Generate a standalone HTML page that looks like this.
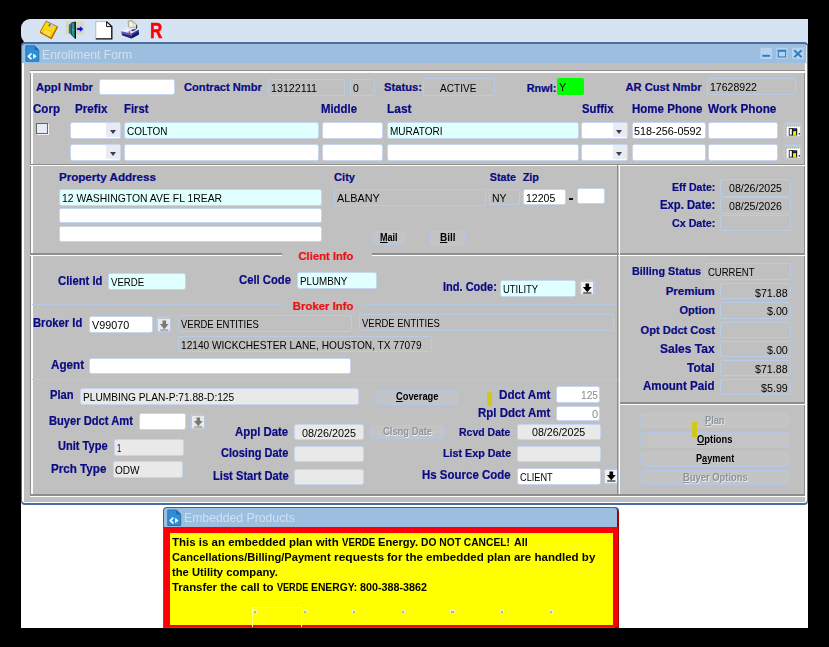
<!DOCTYPE html>
<html><head><meta charset="utf-8"><title>Enrollment Form</title>
<style>
html,body{margin:0;padding:0;background:#000;}
body{width:829px;height:647px;position:relative;overflow:hidden;font-family:"Liberation Sans",sans-serif;}
div,span,i{position:absolute;box-sizing:border-box;display:block;}
#tb{left:21px;top:19px;width:787px;height:25px;background:#d5e3f2;border-radius:9px 0 0 9px;}
#win{left:20.9px;top:42.4px;width:787.2px;height:462.4px;background:#4b6c9e;border-radius:4px 4px 4px 4px;}
#wi{left:22.2px;top:63.3px;width:784.7px;height:440.2px;background:#fff;border-radius:0 0 3px 3px;}
#ttl{left:22.2px;top:43.7px;width:784.7px;height:19.7px;background:#9dbfdf;border-radius:3px 3px 0 0;}
#body{left:24.1px;top:63.3px;width:781px;height:438.3px;background:#c0c0c0;}
#white{left:20.9px;top:500px;width:787.2px;height:127.7px;background:#fff;}
.lg{background:#8e8e8e;}
.lw{background:#fbfbfb;}
.bf{border:1px solid #b4c8e2;border-left:0;border-radius:0 4px 0 0;border-right-color:transparent}
.lb{font-weight:bold;white-space:nowrap;height:16px;line-height:16px;transform-origin:0 50%;}
.fd{white-space:nowrap;overflow:hidden;border:1px solid #b9cce6;border-radius:2.5px;}
.fd span{transform-origin:0 50%;height:100%;}
.fd.nb{border:0;border-radius:2px;}
.bt{font-size:10px;font-weight:bold;color:#000;background:#c4c4c4;border:1.3px solid #b4c8e6;border-radius:3.5px;white-space:nowrap;overflow:hidden;}
.bt span{transform-origin:0 50%;height:100%;}
.bt.dis{color:#8d939c;text-shadow:0.7px 0.7px 0 #f0f0f0;}
.cb{width:11.6px;height:11.6px;background:#e8ecf5;border:1.1px solid #666;box-shadow:1px 1px 0 #f4f4f4;}
.cbx{width:14px;height:13.6px;background:#e8ebf2;border-radius:1px;}
.cbx i{left:3.7px;top:6.2px;width:0;height:0;border-left:3.8px solid transparent;border-right:3.8px solid transparent;border-top:4.4px solid #3c3c58;}
.ib{width:18.8px;height:15.7px;border:1.3px solid #b4c8e6;border-radius:3.5px;background:#c8c8c8;}
.ib svg{position:absolute;left:-1.3px;top:-0.3px}
.lov{width:12px;height:12.4px;}
.lov svg{position:absolute;left:0;top:0}
.lovb{border:1.3px solid #b4c8e6;border-radius:3px;background:#c6c6c6;}
.ym{background:#cdc81a;}
#ep{left:162.6px;top:506.8px;width:456.8px;height:120.9px;background:#45608f;border-radius:4px 4px 0 0;}
#epm{left:615px;top:508.5px;width:4.4px;height:119.2px;background:#a0000c;border-radius:0 4px 0 0;}
#epr{left:163.8px;top:527.1px;width:454.6px;height:99.8px;background:#fb0006;}
#eptl{left:163.8px;top:508px;width:453.4px;height:19.2px;background:#9dbfdf;border-radius:3px 3px 0 0;}
#epy{left:169.8px;top:533.2px;width:443.1px;height:91.5px;background:#ffff00;}
#ov{position:absolute;left:0;top:0;}
.bi{width:4.4px;height:4.4px;background:#eef2c4;}
.bi i{left:1px;top:2px;width:2.4px;height:2px;background:#9ccf50;}
</style></head>
<body>
<div id="white"></div>
<div id="tb"></div>
<div id="win"></div>
<div id="ttl"></div>
<div id="wi"></div>
<div style="left:805.7px;top:45px;width:1.3px;height:19px;background:#dbe8f6"></div>
<div class="lb" style="left:42.2px;top:46.5px;font-size:13px;color:#cfe0f2;font-weight:normal;transform:scaleX(0.9397);">Enrollment Form</div>
<div id="body"></div>
<div class="lg" style="left:29.8px;top:70px;width:1.4px;height:426.8px"></div>
<div class="lw" style="left:31.2px;top:70px;width:1.4px;height:426.8px"></div>
<div class="lg" style="left:803.8px;top:70px;width:1.3px;height:426.8px"></div>
<div class="lw" style="left:805.1px;top:70px;width:0px;height:426.8px"></div>
<div class="lg" style="left:29.8px;top:69.9px;width:775.2px;height:1.4px"></div>
<div class="lw" style="left:29.8px;top:71.3px;width:775.2px;height:1.4px"></div>
<div class="lg" style="left:29.8px;top:163.7px;width:775.2px;height:1.4px"></div>
<div class="lw" style="left:29.8px;top:165.1px;width:775.2px;height:1.4px"></div>
<div class="lg" style="left:29.8px;top:253.2px;width:775.2px;height:1.4px"></div>
<div class="lw" style="left:29.8px;top:254.6px;width:775.2px;height:1.4px"></div>
<div class="lg" style="left:619px;top:402.4px;width:186px;height:1.4px"></div>
<div class="lw" style="left:619px;top:403.8px;width:186px;height:1.4px"></div>
<div class="lg" style="left:29.8px;top:494.3px;width:775.2px;height:1.3px"></div>
<div class="lw" style="left:29.8px;top:495.6px;width:775.2px;height:1.2px"></div>
<div class="lg" style="left:617.1px;top:165px;width:1.4px;height:329px"></div>
<div class="lw" style="left:618.5px;top:165px;width:1.4px;height:329px"></div>
<div class="lb" style="left:36px;top:79px;font-size:11.15px;color:#0a0a82;-webkit-text-stroke:0.2px #0a0a82;">Appl Nmbr</div>
<div class="fd" style="left:99px;top:78.5px;width:76px;height:16.0px;line-height:16.0px;background:#fff;border-color:#c6d6ee;"></div>
<div class="lb" style="left:184px;top:79px;font-size:11.14px;color:#0a0a82;-webkit-text-stroke:0.2px #0a0a82;">Contract Nmbr</div>
<div class="fd" style="left:268px;top:79px;width:77px;height:17px;line-height:17px;background:#c0c0c0;"><span style="left:2px;top:0px;font-size:11.5px;color:#000;transform:scaleX(0.9311)">13122111</span></div>
<div class="fd" style="left:350px;top:79px;width:24.9px;height:17px;line-height:17px;background:#c0c0c0;"><span style="left:2px;top:0px;font-size:11.5px;color:#000;transform:scaleX(0.9076)">0</span></div>
<div class="lb" style="left:384px;top:79px;font-size:11.21px;color:#0a0a82;-webkit-text-stroke:0.2px #0a0a82;">Status:</div>
<div class="fd" style="left:423.3px;top:78.3px;width:71.3px;height:17.3px;line-height:17.3px;background:#c0c0c0;"><span style="left:15.8px;top:1px;font-size:11.5px;color:#000;transform:scaleX(0.8761)">ACTIVE</span></div>
<div class="lb" style="left:526.7px;top:80px;font-size:10.88px;color:#0a0a82;-webkit-text-stroke:0.2px #0a0a82;">Rnwl:</div>
<div class="fd nb" style="left:557px;top:77.8px;width:27.4px;height:17.3px;line-height:17.3px;background:#00ff00;border-color:#c6d6ee;"><span style="left:1.6px;top:1.5px;font-size:11.5px;color:#000;transform:scaleX(0.9385)">Y</span></div>
<div class="lb" style="left:625.6px;top:78.5px;font-size:11.12px;color:#0a0a82;-webkit-text-stroke:0.2px #0a0a82;">AR Cust Nmbr</div>
<div class="fd" style="left:707.1px;top:77.6px;width:88.6px;height:17.0px;line-height:17.0px;background:#c0c0c0;"><span style="left:2.3px;top:0px;font-size:11.5px;color:#000;transform:scaleX(0.9174)">17628922</span></div>
<div class="lb" style="left:33px;top:101.4px;font-size:12.73px;color:#0a0a82;-webkit-text-stroke:0.2px #0a0a82;transform:scaleX(0.9091);">Corp</div>
<div class="lb" style="left:75px;top:101.4px;font-size:12.85px;color:#0a0a82;-webkit-text-stroke:0.2px #0a0a82;transform:scaleX(0.9091);">Prefix</div>
<div class="lb" style="left:124px;top:101.4px;font-size:12.43px;color:#0a0a82;-webkit-text-stroke:0.2px #0a0a82;transform:scaleX(0.9091);">First</div>
<div class="lb" style="left:321px;top:101.4px;font-size:12.50px;color:#0a0a82;-webkit-text-stroke:0.2px #0a0a82;transform:scaleX(0.9091);">Middle</div>
<div class="lb" style="left:386.5px;top:101.4px;font-size:13.10px;color:#0a0a82;-webkit-text-stroke:0.2px #0a0a82;transform:scaleX(0.9091);">Last</div>
<div class="lb" style="left:581.5px;top:101.4px;font-size:12.47px;color:#0a0a82;-webkit-text-stroke:0.2px #0a0a82;transform:scaleX(0.9091);">Suffix</div>
<div class="lb" style="left:631.9px;top:101.4px;font-size:12.68px;color:#0a0a82;-webkit-text-stroke:0.2px #0a0a82;transform:scaleX(0.9091);">Home Phone</div>
<div class="lb" style="left:708.4px;top:101.4px;font-size:12.95px;color:#0a0a82;-webkit-text-stroke:0.2px #0a0a82;transform:scaleX(0.9091);">Work Phone</div>
<div class="cb" style="left:36.4px;top:122.5px"></div>
<div class="fd" style="left:70px;top:122px;width:51px;height:16.5px;line-height:16.5px;background:#fff;border-color:#c6d6ee;"></div>
<div class="cbx" style="left:106.2px;top:123.4px"><i></i></div>
<div class="fd" style="left:124px;top:122px;width:195px;height:16.5px;line-height:16.5px;background:#e0ffff;border-color:#c6d6ee;"><span style="left:2px;top:0px;font-size:11.5px;color:#000;transform:scaleX(0.8643)">COLTON</span></div>
<div class="fd" style="left:322px;top:122px;width:61px;height:16.5px;line-height:16.5px;background:#fff;border-color:#c6d6ee;"></div>
<div class="fd" style="left:387px;top:122px;width:191.6px;height:16.5px;line-height:16.5px;background:#e0ffff;border-color:#c6d6ee;"><span style="left:2px;top:0px;font-size:11.5px;color:#000;transform:scaleX(0.8709)">MURATORI</span></div>
<div class="fd" style="left:581px;top:122px;width:46.6px;height:16.5px;line-height:16.5px;background:#fff;border-color:#c6d6ee;"></div>
<div class="cbx" style="left:612.6px;top:123.4px"><i></i></div>
<div class="fd" style="left:631.9px;top:122px;width:74.0px;height:16.5px;line-height:16.5px;background:#fff;border-color:#c6d6ee;"><span style="left:1.5px;top:0px;font-size:11.5px;color:#000;transform:scaleX(0.9432)">518-256-0592</span></div>
<div class="fd" style="left:707.9px;top:122px;width:69.7px;height:16.5px;line-height:16.5px;background:#fff;border-color:#c6d6ee;"></div>
<div class="ib" style="left:783.1px;top:122.3px"><svg width="19" height="15" viewBox="0 0 19 15"><rect x="3.7" y="3.4" width="13.2" height="9.3" fill="#fdfdfd"/><path d="M3,2.9 H16.6 M2.7,3.2 V12.4" stroke="#9a9a9a" stroke-width="0.8" stroke-dasharray="1 1" fill="none"/><rect x="6.2" y="5.6" width="3.2" height="6.5" fill="#fff" stroke="#111" stroke-width="0.8"/><rect x="8.8" y="5.3" width="5.4" height="7.1" fill="#111"/><rect x="10.1" y="8.1" width="3" height="4.3" fill="#f4ea00"/><rect x="10" y="5.8" width="3" height="1.5" fill="#1428c8"/><rect x="15.7" y="10" width="1.3" height="1.6" fill="#2436e0"/></svg></div>
<div class="fd" style="left:70px;top:144px;width:51px;height:16.5px;line-height:16.5px;background:#fff;border-color:#c6d6ee;"></div>
<div class="cbx" style="left:106.2px;top:145.4px"><i></i></div>
<div class="fd" style="left:124px;top:144px;width:195px;height:16.5px;line-height:16.5px;background:#fff;border-color:#c6d6ee;"></div>
<div class="fd" style="left:322px;top:144px;width:61px;height:16.5px;line-height:16.5px;background:#fff;border-color:#c6d6ee;"></div>
<div class="fd" style="left:387px;top:144px;width:191.6px;height:16.5px;line-height:16.5px;background:#fff;border-color:#c6d6ee;"></div>
<div class="fd" style="left:581px;top:144px;width:46.6px;height:16.5px;line-height:16.5px;background:#fff;border-color:#c6d6ee;"></div>
<div class="cbx" style="left:612.6px;top:145.4px"><i></i></div>
<div class="fd" style="left:631.9px;top:144px;width:74.0px;height:16.5px;line-height:16.5px;background:#fff;border-color:#c6d6ee;"></div>
<div class="fd" style="left:707.9px;top:144px;width:69.7px;height:16.5px;line-height:16.5px;background:#fff;border-color:#c6d6ee;"></div>
<div class="ib" style="left:783.1px;top:144.3px"><svg width="19" height="15" viewBox="0 0 19 15"><rect x="3.7" y="3.4" width="13.2" height="9.3" fill="#fdfdfd"/><path d="M3,2.9 H16.6 M2.7,3.2 V12.4" stroke="#9a9a9a" stroke-width="0.8" stroke-dasharray="1 1" fill="none"/><rect x="6.2" y="5.6" width="3.2" height="6.5" fill="#fff" stroke="#111" stroke-width="0.8"/><rect x="8.8" y="5.3" width="5.4" height="7.1" fill="#111"/><rect x="10.1" y="8.1" width="3" height="4.3" fill="#f4ea00"/><rect x="10" y="5.8" width="3" height="1.5" fill="#1428c8"/><rect x="15.7" y="10" width="1.3" height="1.6" fill="#2436e0"/></svg></div>
<div class="lb" style="left:58.9px;top:169px;font-size:11.64px;color:#0a0a82;-webkit-text-stroke:0.2px #0a0a82;">Property Address</div>
<div class="fd" style="left:59px;top:189.2px;width:262.6px;height:16.5px;line-height:16.5px;background:#e0ffff;border-color:#c6d6ee;"><span style="left:2.1px;top:-0.5px;font-size:11.5px;color:#000;transform:scaleX(0.9044)">12 WASHINGTON AVE FL 1REAR</span></div>
<div class="fd" style="left:59px;top:207.7px;width:262.6px;height:15.5px;line-height:15.5px;background:#fff;border-color:#c6d6ee;"></div>
<div class="fd" style="left:59px;top:225.7px;width:262.6px;height:16.6px;line-height:16.6px;background:#fff;border-color:#c6d6ee;"></div>
<div class="lb" style="left:334.1px;top:169px;font-size:11.06px;color:#0a0a82;-webkit-text-stroke:0.2px #0a0a82;">City</div>
<div class="fd" style="left:334px;top:188.9px;width:152px;height:16.8px;line-height:16.8px;background:#c0c0c0;"><span style="left:2.2px;top:0px;font-size:11.5px;color:#000;transform:scaleX(0.9429)">ALBANY</span></div>
<div class="lb" style="left:489.8px;top:169px;font-size:10.67px;color:#0a0a82;-webkit-text-stroke:0.2px #0a0a82;">State</div>
<div class="fd" style="left:489px;top:188.7px;width:31px;height:16.8px;line-height:16.8px;background:#c0c0c0;"><span style="left:1.8px;top:0px;font-size:11.5px;color:#000;transform:scaleX(0.9134)">NY</span></div>
<div class="lb" style="left:522.7px;top:169px;font-size:10.87px;color:#0a0a82;-webkit-text-stroke:0.2px #0a0a82;">Zip</div>
<div class="fd" style="left:523px;top:188.7px;width:43.3px;height:16.8px;line-height:16.8px;background:#fff;border-color:#c6d6ee;"><span style="left:2.2px;top:0px;font-size:11.5px;color:#000;transform:scaleX(0.9170)">12205</span></div>
<div style="left:568.8px;top:198px;width:4.2px;height:2px;background:#111"></div>
<div class="fd" style="left:576.9px;top:187.7px;width:28.3px;height:16.8px;line-height:16.8px;background:#fff;border-color:#c6d6ee;"></div>
<div class="bt" style="left:371.8px;top:231.3px;width:34.4px;height:14.1px;line-height:12.1px"><span style="left:7.2px;top:0;transform:scaleX(0.9047)"><u>M</u>ail</span></div>
<div class="bt" style="left:430px;top:231.3px;width:34.7px;height:14.3px;line-height:12.3px"><span style="left:8.6px;top:0;transform:scaleX(0.9960)"><u>B</u>ill</span></div>
<div class="lb" style="left:671.5px;top:178.7px;font-size:11.40px;color:#0a0a82;-webkit-text-stroke:0.2px #0a0a82;transform:scaleX(0.9259);">Eff Date:</div>
<div class="fd" style="left:720.4px;top:179.2px;width:70.3px;height:17.5px;line-height:17.5px;background:#c0c0c0;"><span style="left:7.3px;top:0px;font-size:11.5px;color:#000;transform:scaleX(0.9200)">08/26/2025</span></div>
<div class="lb" style="left:659.7px;top:197px;font-size:12.19px;color:#0a0a82;-webkit-text-stroke:0.2px #0a0a82;transform:scaleX(0.9259);">Exp. Date:</div>
<div class="fd" style="left:720.4px;top:197.2px;width:70.3px;height:16.8px;line-height:16.8px;background:#c0c0c0;"><span style="left:7.3px;top:0px;font-size:11.5px;color:#000;transform:scaleX(0.9200)">08/25/2026</span></div>
<div class="lb" style="left:671.5px;top:214.5px;font-size:11.55px;color:#0a0a82;-webkit-text-stroke:0.2px #0a0a82;transform:scaleX(0.9259);">Cx Date:</div>
<div class="fd" style="left:720.4px;top:215px;width:70.3px;height:16.3px;line-height:16.3px;background:#c0c0c0;"></div>
<div style="left:281.5px;top:250px;width:90.3px;height:10px;background:#c0c0c0"></div>
<div class="lb" style="left:298.5px;top:248px;font-size:11.25px;color:#e81010;-webkit-text-stroke:0.2px #e81010;">Client Info</div>
<div class="lb" style="left:57.6px;top:273.2px;font-size:12.83px;color:#0a0a82;-webkit-text-stroke:0.2px #0a0a82;transform:scaleX(0.8772);">Client Id</div>
<div class="fd" style="left:107.6px;top:273.4px;width:78.2px;height:16.6px;line-height:16.6px;background:#e0ffff;border-color:#c6d6ee;"><span style="left:2.0px;top:0px;font-size:11.5px;color:#000;transform:scaleX(0.8350)">VERDE</span></div>
<div class="lb" style="left:239.3px;top:272.4px;font-size:12.62px;color:#0a0a82;-webkit-text-stroke:0.2px #0a0a82;transform:scaleX(0.8929);">Cell Code</div>
<div class="fd" style="left:297px;top:272.4px;width:80.3px;height:16.8px;line-height:16.8px;background:#e0ffff;border-color:#c6d6ee;"><span style="left:1.8px;top:0px;font-size:11.5px;color:#000;transform:scaleX(0.8524)">PLUMBNY</span></div>
<div class="lb" style="left:442.6px;top:279px;font-size:11.91px;color:#0a0a82;-webkit-text-stroke:0.2px #0a0a82;transform:scaleX(0.9259);">Ind. Code:</div>
<div class="fd" style="left:500.3px;top:279.5px;width:76.0px;height:17.0px;line-height:17.0px;background:#e0ffff;border-color:#c6d6ee;"><span style="left:1.5px;top:0px;font-size:11.5px;color:#000;transform:scaleX(0.8199)">UTILITY</span></div>
<div class="lovb" style="left:579px;top:279.3px;width:15.7px;height:16.8px"></div>
<div class="lov" style="left:580.9px;top:281.7px;background:#f0f0f0"><svg width="12" height="12.4" viewBox="0 0 12 12.4"><path d="M4.5,1.5 H8.1 V4.9 H10.7 L6.3,10.2 L1.9,4.9 H4.5 Z" fill="#000"/><rect x="2.2" y="10.5" width="8.2" height="1" fill="#000"/></svg></div>
<div class="bf" style="left:31.5px;top:304.3px;width:586px;height:76px"></div>
<div style="left:283.2px;top:300px;width:79.8px;height:10px;background:#c0c0c0"></div>
<div class="lb" style="left:292.8px;top:297.5px;font-size:11.38px;color:#e81010;-webkit-text-stroke:0.2px #e81010;">Broker Info</div>
<div class="lb" style="left:33.3px;top:315.3px;font-size:12.60px;color:#0a0a82;-webkit-text-stroke:0.2px #0a0a82;transform:scaleX(0.8929);">Broker Id</div>
<div class="fd" style="left:89px;top:315.8px;width:64px;height:17.6px;line-height:17.6px;background:#fff;border-color:#c6d6ee;"><span style="left:1.5px;top:0px;font-size:11.5px;color:#000;transform:scaleX(0.9363)">V99070</span></div>
<div class="lovb" style="left:155.8px;top:316.1px;width:15.7px;height:16.8px"></div>
<div class="lov" style="left:157.7px;top:318.5px;background:#e9e9e9"><svg width="12" height="12.4" viewBox="0 0 12 12.4"><path d="M4.5,1.5 H8.1 V4.9 H10.7 L6.3,10.2 L1.9,4.9 H4.5 Z" fill="#7a7a7a"/><rect x="2.2" y="10.5" width="8.2" height="1" fill="#7a7a7a"/></svg></div>
<div class="fd" style="left:178px;top:314.5px;width:173.7px;height:17.0px;line-height:17.0px;background:#c0c0c0;"><span style="left:2px;top:0px;font-size:11.5px;color:#000;transform:scaleX(0.8235)">VERDE ENTITIES</span></div>
<div class="fd" style="left:359.2px;top:313.8px;width:254.5px;height:16.8px;line-height:16.8px;background:#c0c0c0;"><span style="left:2.0px;top:0px;font-size:11.5px;color:#000;transform:scaleX(0.8235)">VERDE ENTITIES</span></div>
<div class="fd" style="left:178px;top:335.6px;width:253.8px;height:16.8px;line-height:16.8px;background:#c0c0c0;"><span style="left:2px;top:0px;font-size:11.5px;color:#000;transform:scaleX(0.8806)">12140 WICKCHESTER LANE, HOUSTON, TX 77079</span></div>
<div class="lb" style="left:50.9px;top:357.2px;font-size:12.62px;color:#0a0a82;-webkit-text-stroke:0.2px #0a0a82;transform:scaleX(0.9259);">Agent</div>
<div class="fd" style="left:89px;top:357.7px;width:262.2px;height:16.3px;line-height:16.3px;background:#fff;border-color:#c6d6ee;"></div>
<div class="lb" style="left:49.6px;top:386.6px;font-size:12.51px;color:#0a0a82;-webkit-text-stroke:0.2px #0a0a82;transform:scaleX(0.8929);">Plan</div>
<div class="fd" style="left:80.2px;top:388.3px;width:279.0px;height:17.1px;line-height:17.1px;background:#e9e9e9;border-color:#c6d6ee;"><span style="left:1.5px;top:0px;font-size:11.5px;color:#000;transform:scaleX(0.8824)">PLUMBING PLAN-P:71.88-D:125</span></div>
<div class="bt" style="left:376px;top:390.2px;width:81.6px;height:14.6px;line-height:12.6px"><span style="left:18.6px;top:0;transform:scaleX(0.9303)"><u>C</u>overage</span></div>
<div class="ym" style="left:486.5px;top:392px;width:5px;height:14px"></div>
<div class="lb" style="left:499px;top:386.6px;font-size:13.32px;color:#0a0a82;-webkit-text-stroke:0.2px #0a0a82;transform:scaleX(0.8772);">Ddct Amt</div>
<div class="fd" style="left:555.5px;top:386.3px;width:44.5px;height:16.3px;line-height:16.3px;background:#fff;border-color:#c6d6ee;"><span style="left:24.1px;top:0px;font-size:11.5px;color:#8a8a8a;transform:scaleX(0.8867)">125</span></div>
<div class="lb" style="left:478.2px;top:405.2px;font-size:12.40px;color:#0a0a82;-webkit-text-stroke:0.2px #0a0a82;transform:scaleX(0.9259);">Rpl Ddct Amt</div>
<div class="fd" style="left:555.5px;top:405.6px;width:44.5px;height:15.8px;line-height:15.8px;background:#fff;border-color:#c6d6ee;"><span style="left:35.0px;top:0px;font-size:11.5px;color:#8a8a8a;transform:scaleX(0.9545)">0</span></div>
<div class="lb" style="left:49.4px;top:413px;font-size:11.95px;color:#0a0a82;-webkit-text-stroke:0.2px #0a0a82;transform:scaleX(0.9346);">Buyer Ddct Amt</div>
<div class="fd" style="left:138.7px;top:413.4px;width:47.6px;height:17.1px;line-height:17.1px;background:#fff;border-color:#c6d6ee;"></div>
<div class="lovb" style="left:189.6px;top:413.2px;width:15.7px;height:16.8px"></div>
<div class="lov" style="left:191.5px;top:415.6px;background:#e9e9e9"><svg width="12" height="12.4" viewBox="0 0 12 12.4"><path d="M4.5,1.5 H8.1 V4.9 H10.7 L6.3,10.2 L1.9,4.9 H4.5 Z" fill="#7a7a7a"/><rect x="2.2" y="10.5" width="8.2" height="1" fill="#7a7a7a"/></svg></div>
<div class="lb" style="left:235px;top:424.2px;font-size:12.77px;color:#0a0a82;-webkit-text-stroke:0.2px #0a0a82;transform:scaleX(0.8929);">Appl Date</div>
<div class="fd" style="left:294px;top:424.2px;width:70.3px;height:16.3px;line-height:16.3px;background:#e9e9e9;border-color:#c6d6ee;"><span style="left:7.3px;top:0px;font-size:11.5px;color:#000;transform:scaleX(0.9374)">08/26/2025</span></div>
<div class="bt dis" style="left:370px;top:424.6px;width:74.6px;height:14.0px;line-height:12.0px"><span style="left:12px;top:0;transform:scaleX(0.9381)">Clsng Date</span></div>
<div class="lb" style="left:459.4px;top:423.5px;font-size:11.45px;color:#0a0a82;-webkit-text-stroke:0.2px #0a0a82;transform:scaleX(0.9174);">Rcvd Date</div>
<div class="fd" style="left:517.3px;top:424.4px;width:83.3px;height:15.8px;line-height:15.8px;background:#e9e9e9;border-color:#c6d6ee;"><span style="left:14.1px;top:0px;font-size:11.5px;color:#000;transform:scaleX(0.9252)">08/26/2025</span></div>
<div class="lb" style="left:58.1px;top:438.3px;font-size:11.92px;color:#0a0a82;-webkit-text-stroke:0.2px #0a0a82;transform:scaleX(0.9302);">Unit Type</div>
<div class="fd" style="left:113.6px;top:438.7px;width:70.7px;height:17.3px;line-height:17.3px;background:#e9e9e9;border-color:#c6d6ee;"><span style="left:2.7px;top:0px;font-size:11.5px;color:#000;transform:scaleX(0.6572)">1</span></div>
<div class="lb" style="left:220.8px;top:445px;font-size:11.85px;color:#0a0a82;-webkit-text-stroke:0.2px #0a0a82;transform:scaleX(0.9302);">Closing Date</div>
<div class="fd" style="left:294px;top:446.3px;width:70.3px;height:16.2px;line-height:16.2px;background:#e9e9e9;border-color:#c6d6ee;"></div>
<div class="lb" style="left:442.6px;top:445.3px;font-size:11.19px;color:#0a0a82;-webkit-text-stroke:0.2px #0a0a82;transform:scaleX(0.9615);">List Exp Date</div>
<div class="fd" style="left:517.3px;top:446px;width:83.3px;height:16.3px;line-height:16.3px;background:#e9e9e9;border-color:#c6d6ee;"></div>
<div class="lb" style="left:51.4px;top:460.5px;font-size:13.49px;color:#0a0a82;-webkit-text-stroke:0.2px #0a0a82;transform:scaleX(0.8621);">Prch Type</div>
<div class="fd" style="left:112.8px;top:461.2px;width:70.3px;height:17.0px;line-height:17.0px;background:#e9e9e9;border-color:#c6d6ee;"><span style="left:1.5px;top:0px;font-size:11.5px;color:#000;transform:scaleX(0.8752)">ODW</span></div>
<div class="lb" style="left:212.5px;top:468px;font-size:11.94px;color:#0a0a82;-webkit-text-stroke:0.2px #0a0a82;transform:scaleX(0.9346);">List Start Date</div>
<div class="fd" style="left:294px;top:469px;width:70.3px;height:16.3px;line-height:16.3px;background:#e9e9e9;border-color:#c6d6ee;"></div>
<div class="lb" style="left:422px;top:467.4px;font-size:13.10px;color:#0a0a82;-webkit-text-stroke:0.2px #0a0a82;transform:scaleX(0.8772);">Hs Source Code</div>
<div class="fd" style="left:517.3px;top:467.8px;width:83.3px;height:17.1px;line-height:17.1px;background:#fff;border-color:#c6d6ee;"><span style="left:1.5px;top:0px;font-size:11.5px;color:#000;transform:scaleX(0.7994)">CLIENT</span></div>
<div class="lovb" style="left:603px;top:467.9px;width:15.7px;height:16.8px"></div>
<div class="lov" style="left:604.9px;top:470.3px;background:#f0f0f0"><svg width="12" height="12.4" viewBox="0 0 12 12.4"><path d="M4.5,1.5 H8.1 V4.9 H10.7 L6.3,10.2 L1.9,4.9 H4.5 Z" fill="#000"/><rect x="2.2" y="10.5" width="8.2" height="1" fill="#000"/></svg></div>
<div class="lg" style="left:617.1px;top:460px;width:1.4px;height:30px"></div>
<div class="lw" style="left:618.5px;top:460px;width:1.4px;height:30px"></div>
<div class="lb" style="left:631.8px;top:262.7px;font-size:11.69px;color:#0a0a82;-webkit-text-stroke:0.2px #0a0a82;transform:scaleX(0.9259);">Billing Status</div>
<div class="fd" style="left:704.8px;top:263.2px;width:85.8px;height:17.0px;line-height:17.0px;background:#c0c0c0;"><span style="left:2.0px;top:0px;font-size:11.5px;color:#000;transform:scaleX(0.8264)">CURRENT</span></div>
<div class="lb" style="left:665.7px;top:283px;font-size:11.49px;color:#0a0a82;-webkit-text-stroke:0.2px #0a0a82;">Premium</div>
<div class="fd" style="left:719.9px;top:282.7px;width:70.7px;height:16.8px;line-height:16.8px;background:#c0c0c0;"><span style="left:34.6px;top:1px;font-size:11.5px;color:#000;transform:scaleX(0.9277)">$71.88</span></div>
<div class="lb" style="left:679.5px;top:301.8px;font-size:10.99px;color:#0a0a82;-webkit-text-stroke:0.2px #0a0a82;">Option</div>
<div class="fd" style="left:719.9px;top:302px;width:70.7px;height:16.6px;line-height:16.6px;background:#c0c0c0;"><span style="left:46.4px;top:0px;font-size:11.5px;color:#000;transform:scaleX(0.9303)">$.00</span></div>
<div class="lb" style="left:640.6px;top:321.6px;font-size:11.05px;color:#0a0a82;-webkit-text-stroke:0.2px #0a0a82;">Opt Ddct Cost</div>
<div class="fd" style="left:719.9px;top:321.6px;width:70.7px;height:16.4px;line-height:16.4px;background:#c0c0c0;"></div>
<div class="lb" style="left:660.2px;top:340.7px;font-size:13.00px;color:#0a0a82;-webkit-text-stroke:0.2px #0a0a82;transform:scaleX(0.9259);">Sales Tax</div>
<div class="fd" style="left:719.9px;top:341.2px;width:70.7px;height:16.3px;line-height:16.3px;background:#c0c0c0;"><span style="left:46.4px;top:0px;font-size:11.5px;color:#000;transform:scaleX(0.9303)">$.00</span></div>
<div class="lb" style="left:687.3px;top:359.5px;font-size:12.87px;color:#0a0a82;-webkit-text-stroke:0.2px #0a0a82;transform:scaleX(0.9259);">Total</div>
<div class="fd" style="left:719.9px;top:360px;width:70.7px;height:16.2px;line-height:16.2px;background:#c0c0c0;"><span style="left:34.6px;top:0px;font-size:11.5px;color:#000;transform:scaleX(0.9277)">$71.88</span></div>
<div class="lb" style="left:643.4px;top:378.3px;font-size:12.52px;color:#0a0a82;-webkit-text-stroke:0.2px #0a0a82;transform:scaleX(0.9259);">Amount Paid</div>
<div class="fd" style="left:719.9px;top:378.8px;width:70.7px;height:16.3px;line-height:16.3px;background:#c0c0c0;"><span style="left:40.4px;top:0px;font-size:11.5px;color:#000;transform:scaleX(0.9322)">$5.99</span></div>
<div class="bt dis" style="left:640.1px;top:412.7px;width:150.0px;height:15.8px;line-height:13.8px"><span style="left:64.2px;top:0;transform:scaleX(0.9183)"><u>P</u>lan</span></div>
<div class="bt" style="left:640.1px;top:431.5px;width:150.0px;height:16.3px;line-height:14.3px"><span style="left:55.9px;top:0;transform:scaleX(0.9370)"><u>O</u>ptions</span></div>
<div class="bt" style="left:640.1px;top:450.8px;width:150.0px;height:15.8px;line-height:13.8px"><span style="left:54.9px;top:0;transform:scaleX(0.9163)">P<u>a</u>yment</span></div>
<div class="bt dis" style="left:640.1px;top:469.6px;width:150.0px;height:15.8px;line-height:13.8px"><span style="left:41.7px;top:0;transform:scaleX(0.9390)"><u>B</u>uyer Options</span></div>
<div class="ym" style="left:692px;top:422.2px;width:4.8px;height:14.8px"></div>
<div id="ep"></div>
<div id="epm"></div>
<div id="epr"></div>
<div id="eptl"></div>
<div class="lb" style="left:184px;top:510.2px;font-size:13px;color:#cfe0f2;font-weight:normal;transform:scaleX(0.9404);">Embedded Products</div>
<div id="epy"></div>
<div class="lb" style="left:171.5px;top:534.2px;font-size:11px;color:#000;transform:scaleX(1.0449);">This is an embedded plan with</div>
<div class="lb" style="left:341.7px;top:534.2px;font-size:11px;color:#000;transform:scaleX(0.8785);">VERDE</div>
<div class="lb" style="left:378px;top:534.2px;font-size:11px;color:#000;transform:scaleX(1.0136);">Energy.</div>
<div class="lb" style="left:421.3px;top:534.2px;font-size:11px;color:#000;transform:scaleX(0.9327);">DO NOT CANCEL!</div>
<div class="lb" style="left:513.9px;top:534.2px;font-size:11px;color:#000;transform:scaleX(0.9671);">All</div>
<div class="lb" style="left:171.5px;top:549.2px;font-size:11px;color:#000;transform:scaleX(1.0096);">Cancellations/Billing/Payment</div>
<div class="lb" style="left:333.6px;top:549.2px;font-size:11px;color:#000;transform:scaleX(1.0921);">requests</div>
<div class="lb" style="left:386.6px;top:549.2px;font-size:11px;color:#000;transform:scaleX(1.0486);">for the embedded plan are handled by</div>
<div class="lb" style="left:171.5px;top:564.2px;font-size:11px;color:#000;transform:scaleX(1.0198);">the Utility company.</div>
<div class="lb" style="left:171.5px;top:579.2px;font-size:11px;color:#000;transform:scaleX(1.0382);">Transfer the call to</div>
<div class="lb" style="left:276.6px;top:579.2px;font-size:11px;color:#000;transform:scaleX(0.8257);">VERDE</div>
<div class="lb" style="left:310.5px;top:579.2px;font-size:11px;color:#000;transform:scaleX(0.9389);">ENERGY:</div>
<div class="lb" style="left:360px;top:579.2px;font-size:11px;color:#000;transform:scaleX(0.9772);">800-388-3862</div>
<div style="left:251.8px;top:607.4px;width:50px;height:20px;border:1px solid #ffff8a;border-bottom:0"></div>
<div class="bi" style="left:253px;top:608.6px"><i></i></div>
<div class="bi" style="left:302.6px;top:608.6px"><i></i></div>
<div class="bi" style="left:352px;top:608.6px"><i></i></div>
<div class="bi" style="left:401px;top:608.6px"><i></i></div>
<div class="bi" style="left:450.3px;top:608.6px"><i></i></div>
<div class="bi" style="left:499.5px;top:608.6px"><i></i></div>
<div class="bi" style="left:548.8px;top:608.6px"><i></i></div>
<svg id="ov" width="829" height="647" viewBox="0 0 829 647"><path d="M46.1,21.2 L57.6,26.8 L51.4,38.6 L40.1,32 Z" fill="#ffd800" stroke="#a8640c" stroke-width="0.9"/><path d="M40.4,32.3 L51.3,38.3 L57.2,27.2" fill="none" stroke="#c06a00" stroke-width="1.5"/><path d="M49.6,23.2 L54.4,25.6 L52.8,28.4 L48.2,26 Z" fill="#c8c8d2"/><path d="M49.4,23.6 L50.8,24.3 L49.6,26.8 L48.2,26 Z" fill="#6a6a72"/><path d="M45.2,28.8 L52,32.4 L49.6,36.6 L42.8,33 Z" fill="#ffe14a" stroke="#f0b400" stroke-width="0.6"/><rect x="65.6" y="21.2" width="18" height="13.1" fill="#d9d8b8"/><path d="M68.6,24.4 L71.2,23.2 V34.6 L68.6,33.2 Z" fill="#2a6a66" stroke="#f2f2e6" stroke-width="0.5"/><path d="M71.2,23.2 L75.1,21.9 L75.4,38.5 L71.4,34.8 Z" fill="#229494" stroke="#0a2428" stroke-width="0.8"/><path d="M75.1,21.9 L75.4,38.5" stroke="#000" stroke-width="1.1"/><rect x="72.6" y="29.4" width="1" height="1" fill="#e8e070"/><path d="M76.7,27.5 H79.6 V25.6 L83.8,29 L79.6,32.4 V30.5 H76.7 Z" fill="#0a0ae6" stroke="#f4f4f0" stroke-width="0.6"/><path d="M95.8,21.6 H106.6 L111.8,26.6 V38.8 H95.8 Z" fill="#fff" stroke="#9a9a9a" stroke-width="0.6"/><path d="M106.6,21.6 L111.8,26.6 V38.8 H95.8" fill="none" stroke="#111" stroke-width="1.3"/><path d="M106.6,21.6 V26.6 H111.8" fill="none" stroke="#111" stroke-width="1"/><path d="M128,21 L132.3,20.5 L136.9,24.7 L136.3,28.6 L128.8,27.6 Z" fill="#c9c99a" stroke="#8c8c66" stroke-width="0.5"/><path d="M129.2,22 H132.2 L133,26.8 H129.6 Z" fill="#f4f4fa"/><path d="M133.4,23 L135.6,24.8 L135.4,27 L133.6,26.6 Z" fill="#f2f2dc"/><path d="M136.4,24.8 L137.2,25.6 L137,29.2 L136,28.8 Z" fill="#1a1a2a"/><path d="M121.2,31 L127.2,27.7 L138.4,29.3 L131.5,33.6 Z" fill="#dedef2" stroke="#f4f6fb" stroke-width="0.6"/><path d="M121,31.3 L131.5,33.6 V38.5 L122.2,35.3 Z" fill="#5a5cb4"/><path d="M121.6,33.4 L131.5,36 V38.5 L122.2,35.3 Z" fill="#23245f"/><path d="M131.5,33.6 L138.8,29.4 V34.4 L131.5,38.5 Z" fill="#3434b4"/><path d="M131.5,35.6 L138.8,31.6 V34.4 L131.5,38.5 Z" fill="#191a52"/><path d="M124.5,30.6 L127.5,29.2 L130,29.8 L127,31.4 Z" fill="#ffffff"/><path d="M130.5,30.2 L134,28.9 L136.5,29.6 L133,31.2 Z" fill="#3c3c8c"/><circle cx="129.4" cy="32.1" r="0.9" fill="#e02828"/><g transform="translate(25.9,45.8)"><path d="M0,0 H8.6 L12.9,4.2 V15.5 H0 Z" fill="#2f8fd4" stroke="#1c6fb6" stroke-width="0.9"/><path d="M8.6,0 V4.2 H12.9 Z" fill="#1a68ad"/><path d="M5.6,7.7 L2.6,10.5 L5.6,13.3" fill="none" stroke="#fff" stroke-width="1.7"/><path d="M7.3,7.8 L10.7,10.5 L7.3,13.2 Z" fill="#fff"/></g><g transform="translate(167.8,510)"><path d="M0,0 H8.6 L12.9,4.2 V15.5 H0 Z" fill="#2f8fd4" stroke="#1c6fb6" stroke-width="0.9"/><path d="M8.6,0 V4.2 H12.9 Z" fill="#1a68ad"/><path d="M5.6,7.7 L2.6,10.5 L5.6,13.3" fill="none" stroke="#fff" stroke-width="1.7"/><path d="M7.3,7.8 L10.7,10.5 L7.3,13.2 Z" fill="#fff"/></g><rect x="760.4" y="47.8" width="11.4" height="11.3" rx="1" fill="#b8d3ed"/><rect x="776.3" y="47.8" width="11.4" height="11.3" rx="1" fill="#b8d3ed"/><rect x="792.1" y="47.8" width="11.4" height="11.3" rx="1" fill="#b8d3ed"/><rect x="762.3" y="54.8" width="7.7" height="2" fill="#2e7fc4"/><rect x="778.3" y="50.4" width="7.3" height="6.6" fill="none" stroke="#2e7fc4" stroke-width="1.1"/><rect x="777.8" y="49.8" width="8.3" height="2" fill="#2e7fc4"/><path d="M794.2,50.2 L801.6,57.3 M801.6,50.2 L794.2,57.3" stroke="#2e7fc4" stroke-width="1.9" fill="none"/></svg>
<div class="lb" style="left:150.3px;top:18px;height:26px;line-height:26px;font-size:22px;color:#ff0000;-webkit-text-stroke:0.5px #ff0000;transform:scaleX(0.7740)">R</div>
</body></html>
